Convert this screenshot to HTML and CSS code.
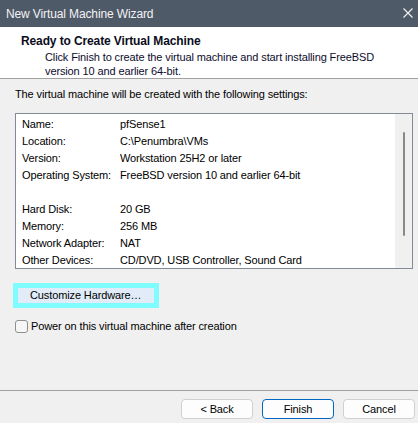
FILE: index.html
```html
<!DOCTYPE html>
<html lang="en">
<head>
  <meta charset="UTF-8">
  <title>New Virtual Machine Wizard</title>
  <link rel="stylesheet" href="styles.css">
</head>
<body>

  <div class="window">
    <div class="titlebar">
      <span class="title">New Virtual Machine Wizard</span>
      <svg class="close" width="10" height="10" viewBox="0 0 10 10">
        <path d="M0.5 0.5 L9.5 9.5 M9.5 0.5 L0.5 9.5" stroke="#f2f2f2" stroke-width="1.1" fill="none"/>
      </svg>
    </div>

    <div class="header">
      <h1>Ready to Create Virtual Machine</h1>
      <p>Click Finish to create the virtual machine and start installing FreeBSD<br>version 10 and earlier 64-bit.</p>
    </div>

    <div class="content">
      <p class="intro">The virtual machine will be created with the following settings:</p>

      <div class="listbox">
        <div class="rows">
          <div class="row"><span class="label">Name:</span><span>pfSense1</span></div>
          <div class="row"><span class="label">Location:</span><span>C:\Penumbra\VMs</span></div>
          <div class="row"><span class="label">Version:</span><span>Workstation 25H2 or later</span></div>
          <div class="row"><span class="label">Operating System:</span><span>FreeBSD version 10 and earlier 64-bit</span></div>
          <div class="row"></div>
          <div class="row"><span class="label">Hard Disk:</span><span>20 GB</span></div>
          <div class="row"><span class="label">Memory:</span><span>256 MB</span></div>
          <div class="row"><span class="label">Network Adapter:</span><span>NAT</span></div>
          <div class="row"><span class="label">Other Devices:</span><span>CD/DVD, USB Controller, Sound Card</span></div>
        </div>
        <div class="scrollbar"><div class="thumb"></div></div>
      </div>

      <div class="customize">
        <button class="custom-btn">Customize Hardware…</button>
      </div>

      <label class="check">
        <span class="box"></span>
        <span>Power on this virtual machine after creation</span>
      </label>
    </div>

    <div class="footer">
      <button class="btn">&lt; Back</button>
      <button class="btn default">Finish</button>
      <button class="btn">Cancel</button>
    </div>
  </div>

</body>
</html>
```

FILE: styles.css
```css
body {
  margin: 0;
  padding: 0;
  font-family: "Liberation Sans", Arial, sans-serif;
  font-size: 11px;
  letter-spacing: -0.12px;
  color: #000;
  background-color: #f0f0f0;
}

.window {
  width: 418px;
  height: 423px;
  display: flex;
  flex-direction: column;
  overflow: hidden;
}

.titlebar {
  height: 27px;
  flex-shrink: 0;
  background-color: #4f5a69;
  display: flex;
  align-items: center;
  justify-content: space-between;
  padding: 0 5px 0 6px;
}

.title {
  font-size: 12px;
  color: #f2f2f2;
}

.close {
  display: block;
  margin-top: -2px;
}

.header {
  background-color: #fff;
  flex-shrink: 0;
  border-bottom: 1px solid #a0a0a0;
  padding-top: 7px;
  height: 44px;
}

.header h1 {
  margin: 0 0 2px 21px;
  font-size: 12px;
  line-height: 14px;
  font-weight: bold;
  color: #0c0c1c;
}

.header p {
  margin: 0 0 0 45px;
  line-height: 14px;
  color: #0c0c2c;
}

.content {
  flex: 1;
  padding: 8px 6px 0 15px;
}

.intro {
  margin: 0 0 12px;
  line-height: 14px;
}

.listbox {
  width: 396px;
  height: 154px;
  border: 1px solid #838a95;
  background-color: #fff;
  display: flex;
  overflow: hidden;
}

.rows {
  flex: 1;
  padding: 2px 0 0 6px;
}

.row {
  display: flex;
  height: 17px;
  line-height: 17px;
  white-space: nowrap;
}

.label {
  width: 98px;
}

.scrollbar {
  width: 17px;
  background-color: #f0f0f0;
  padding-top: 18px;
  display: flex;
  justify-content: center;
}

.thumb {
  width: 2px;
  height: 104px;
  background-color: #8a8a8a;
  border-radius: 1px;
}

.customize {
  margin: 14px 0 0 -2px;
}

.custom-btn {
  font-family: inherit;
  font-size: 11px;
  letter-spacing: inherit;
  color: #000;
  width: 146px;
  height: 25px;
  border: 5px solid #7ffcff;
  background-color: #e1ecf8;
  padding: 0 0 0 12px;
  text-align: left;
  line-height: 15px;
}

.check {
  display: flex;
  align-items: center;
  gap: 3px;
  margin-top: 11px;
  line-height: 14px;
}

.box {
  width: 11px;
  height: 11px;
  border: 1px solid #8f8f8f;
  border-radius: 3px;
  background-color: #f6f6f6;
}

.footer {
  flex-shrink: 0;
  border-top: 1px solid #a0a0a0;
  display: flex;
  justify-content: flex-end;
  gap: 9px;
  padding: 8px 3px 0 0;
  box-sizing: border-box;
  height: 33px;
}

.btn {
  font-family: inherit;
  font-size: 11px;
  letter-spacing: inherit;
  color: #000;
  width: 72px;
  height: 20px;
  border: 1px solid #d0d0d0;
  border-radius: 4px;
  background-color: #fdfdfd;
  padding: 0;
}

.btn.default {
  border-color: #0067c0;
}
```
